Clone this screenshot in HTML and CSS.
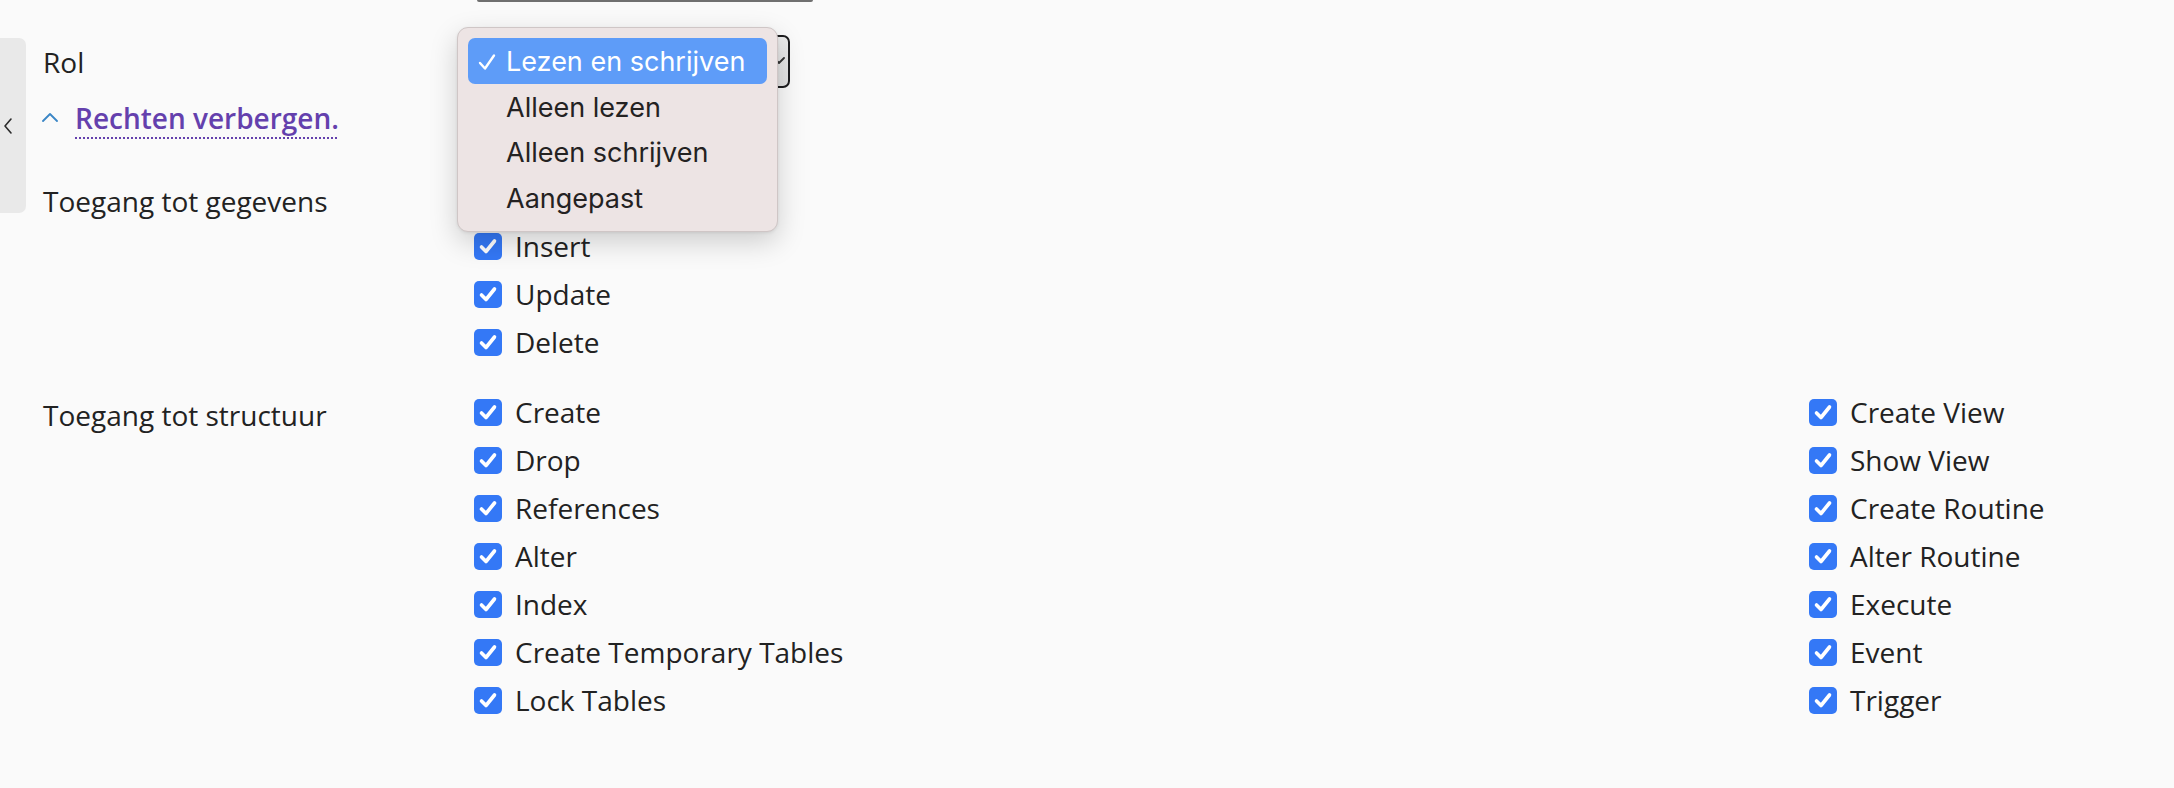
FILE: index.html
```html
<!DOCTYPE html>
<html lang="nl">
<head>
<meta charset="utf-8">
<title>Rechten</title>
<link rel="stylesheet" href="styles.css">
</head>
<body>
<div class="handle" aria-label="Zijbalk">
  <svg viewBox="0 0 12 18" width="12" height="18"><path d="M9 2 L3 9 L9 16" fill="none" stroke="#2b2b2b" stroke-width="1.6" stroke-linecap="round" stroke-linejoin="round"/></svg>
</div>
<div class="top-edge"></div>
<main class="form">
  <div class="row role">
    <div class="label">Rol</div>
    <div class="field">
      <div class="select">
        <svg class="select-arrow" viewBox="0 0 12 8" width="12" height="8"><path d="M1 1 L6 6 L11 1" fill="none" stroke="#333" stroke-width="1.8" stroke-linecap="round" stroke-linejoin="round"/></svg>
      </div>
      <ul class="menu">
        <li class="opt active"><svg class="tick" viewBox="0 0 18 18" width="18" height="18"><path d="M2 10 L7 15.5 L16 2.5" fill="none" stroke="#fff" stroke-width="2.4" stroke-linecap="round" stroke-linejoin="round"/></svg>Lezen en schrijven</li>
        <li class="opt">Alleen lezen</li>
        <li class="opt">Alleen schrijven</li>
        <li class="opt">Aangepast</li>
      </ul>
    </div>
  </div>

  <div class="toggle">
    <svg class="up" viewBox="0 0 18 10" width="18" height="10"><path d="M2 9 L9 2 L16 9" fill="none" stroke="#3a86c6" stroke-width="1.8" stroke-linecap="round" stroke-linejoin="round"/></svg>
    <a class="toggle-link" href="#">Rechten verbergen.</a>
  </div>

  <section class="row section first">
    <div class="label sec-label">Toegang tot gegevens</div>
    <div class="checks">
      <ul class="col">
        <li class="check covered"><span class="box"></span></li>
        <li class="check"><span class="box"></span>Insert</li>
        <li class="check"><span class="box"></span>Update</li>
        <li class="check"><span class="box"></span>Delete</li>
      </ul>
    </div>
  </section>

  <section class="row section">
    <div class="label sec-label">Toegang tot structuur</div>
    <div class="checks two">
      <ul class="col">
        <li class="check"><span class="box"></span>Create</li>
        <li class="check"><span class="box"></span>Drop</li>
        <li class="check"><span class="box"></span>References</li>
        <li class="check"><span class="box"></span>Alter</li>
        <li class="check"><span class="box"></span>Index</li>
        <li class="check"><span class="box"></span>Create Temporary Tables</li>
        <li class="check"><span class="box"></span>Lock Tables</li>
      </ul>
      <ul class="col">
        <li class="check"><span class="box"></span>Create View</li>
        <li class="check"><span class="box"></span>Show View</li>
        <li class="check"><span class="box"></span>Create Routine</li>
        <li class="check"><span class="box"></span>Alter Routine</li>
        <li class="check"><span class="box"></span>Execute</li>
        <li class="check"><span class="box"></span>Event</li>
        <li class="check"><span class="box"></span>Trigger</li>
      </ul>
    </div>
  </section>
</main>
</body>
</html>
```
FILE: styles.css
```css
* { box-sizing: border-box; }
html, body { margin: 0; padding: 0; }
body {
  width: 2174px;
  height: 788px;
  overflow: hidden;
  position: relative;
  background: #fafafa;
  color: #222222;
  font-family: "Open Sans", "Noto Sans", sans-serif;
  font-size: 28px;
}
.handle {
  position: absolute;
  left: 0;
  top: 38px;
  width: 26px;
  height: 175px;
  background: #e9e9e9;
  border-radius: 0 7px 7px 0;
  display: flex;
  align-items: center;
  padding-left: 2px;
}
.handle svg { display: block; }
.top-edge {
  margin-left: 477px;
  width: 336px;
  height: 2px;
  background: #707070;
  border-radius: 0 0 4px 4px;
}
.form {
  padding-left: 43px;
  padding-top: 33px;
}
.row {
  display: grid;
  grid-template-columns: 431px auto;
}
.label { line-height: 48px; white-space: nowrap; }
.role { align-items: center; height: 53px; }
.field { position: relative; width: 316px; height: 53px; }
.select {
  width: 316px;
  height: 53px;
  border: 2px solid #1d1d1f;
  border-radius: 7px;
  background: linear-gradient(#ececec, #e2e2e2);
  position: relative;
}
.select-arrow { position: absolute; right: 3px; top: 20px; }
.menu {
  position: absolute;
  left: -17px;
  top: -8px;
  width: 321px;
  height: 205px;
  margin: 0;
  padding: 10px;
  list-style: none;
  background: #ede4e4;
  border: 1px solid #cfc6c6;
  border-radius: 11px;
  box-shadow: 0 10px 28px rgba(0, 0, 0, 0.18), 0 1px 3px rgba(0, 0, 0, 0.08);
  font-family: Inter, "Liberation Sans", sans-serif;
  font-size: 27px;
  color: #242222;
  z-index: 5;
}
.opt {
  position: relative;
  height: 45.7px;
  line-height: 45.7px;
  padding-left: 38px;
  padding-top: 1px;
  border-radius: 7px;
  white-space: nowrap;
}
.opt.active { background: #5e9cf8; color: #ffffff; }
.tick { position: absolute; left: 10px; top: 15px; }
.toggle {
  display: flex;
  align-items: center;
  height: 48px;
  margin-top: 6px;
  margin-left: -2px;
}
.up { margin-right: 16px; margin-top: -2px; }
.toggle-link {
  color: #6440ad;
  font-weight: 600;
  text-decoration-line: underline;
  text-decoration-style: dotted;
  text-decoration-thickness: 2px;
  text-underline-offset: 8px;
  text-decoration-color: #6440ad;
}
.section.first { margin-top: 32px; }
.section { margin-top: 22px; }
.sec-label { padding-top: 3px; }
.checks.two {
  display: grid;
  grid-template-columns: 1335px auto;
}
.col { list-style: none; margin: 0; padding: 0; }
.check {
  display: flex;
  align-items: center;
  gap: 13px;
  height: 48px;
  white-space: nowrap;
}
.box {
  flex: none;
  width: 28px;
  height: 27px;
  border-radius: 5px;
  background: #3478f6 url("data:image/svg+xml,%3Csvg xmlns='http://www.w3.org/2000/svg' viewBox='0 0 28 27'%3E%3Cpath d='M7.5 14 L12 18.5 L20.5 8' fill='none' stroke='white' stroke-width='3.6' stroke-linecap='round' stroke-linejoin='round'/%3E%3C/svg%3E") center / 28px 27px no-repeat;
}
```
